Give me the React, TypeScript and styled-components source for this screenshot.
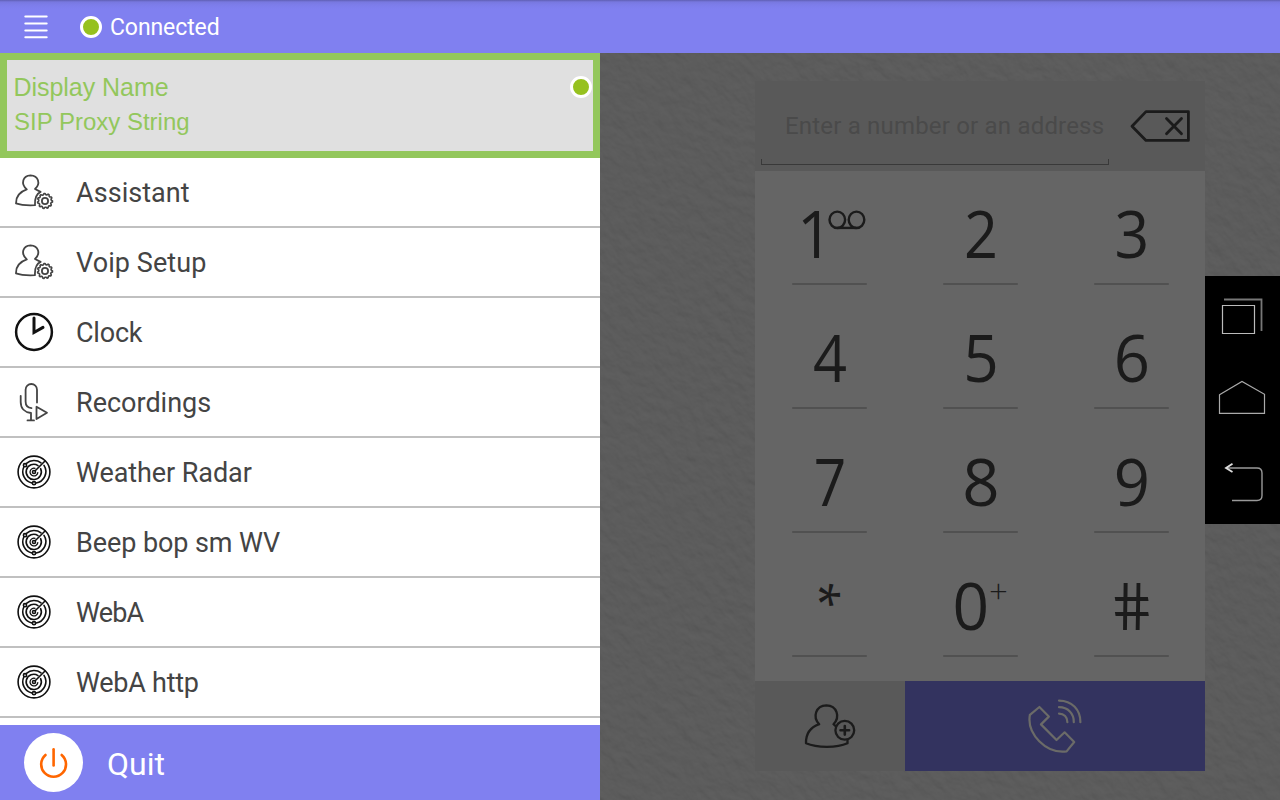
import React from "react";
import styled, { createGlobalStyle } from "styled-components";

const GlobalStyle = createGlobalStyle`
  * { box-sizing: border-box; }
  body { margin: 0; background: #5b5b5b; font-family: Roboto, "Liberation Sans", sans-serif; }
  svg { display: block; flex: none; }
`;

const Screen = styled.div`
  width: 1280px;
  height: 800px;
  display: flex;
  flex-direction: column;
  overflow: hidden;
`;

const TopBar = styled.header`
  height: 53px;
  flex: none;
  display: flex;
  align-items: center;
  padding-left: 24px;
  background: linear-gradient(#5f5fb4 0, #6c6cca 1px, #7878e0 2px, #7d7dea 5px, #8080f0 9px);
`;

const StatusDot = styled.span`
  width: 22px;
  height: 22px;
  flex: none;
  border-radius: 50%;
  border: 3px solid #fff;
  background: #96c11f;
`;

const StatusText = styled.span`
  color: #fff;
  font-size: 23px;
  line-height: 28px;
  margin-left: 8px;
  padding-top: 2px;
  letter-spacing: -0.1px;
`;

const MenuButton = styled.button`
  border: 0;
  padding: 0;
  margin-right: 32px;
  background: none;
`;

const Body = styled.main`
  flex: 1;
  display: flex;
  min-height: 0;
`;

const Drawer = styled.aside`
  width: 600px;
  display: flex;
  flex-direction: column;
  background: #fff;
`;

const Account = styled.section`
  height: 105px;
  border: 7px solid #93c75c;
  background: #e0e0e0;
  display: flex;
  justify-content: space-between;
  padding: 10px 1px 0 7px;
  color: #93c75c;
  font-family: "Liberation Sans", Arial, sans-serif;
`;

const AccountName = styled.div`
  font-size: 25px;
  line-height: 34px;
  letter-spacing: -0.04px;
  margin-left: -0.5px;
`;

const AccountAddress = styled.div`
  font-size: 24px;
  line-height: 36px;
`;

const AccountDot = styled(StatusDot)`
  margin-top: 6px;
`;

const MenuList = styled.nav`
  flex: 1;
`;

const MenuItem = styled.div`
  height: 70px;
  display: flex;
  align-items: center;
  gap: 22px;
  padding-left: 14px;
  border-bottom: 2px solid #c0c0c0;
  color: #444;
  font-size: 27px;
`;

const MenuLabel = styled.span<{ $spacing: number }>`
  letter-spacing: ${(p) => p.$spacing}px;
  padding-top: 1px;
`;

const QuitBar = styled.footer`
  height: 75px;
  display: flex;
  align-items: center;
  gap: 24px;
  padding-left: 24px;
  background: #8080f0;
  color: #fff;
  font-size: 32px;
`;

const QuitLabel = styled.span`
  padding-top: 2px;
`;

const QuitBadge = styled.span`
  width: 59px;
  height: 59px;
  border-radius: 50%;
  background: #fff;
  display: grid;
  place-items: center;
`;

const Stage = styled.section`
  flex: 1;
  position: relative;
  display: flex;
  justify-content: flex-end;
  align-items: flex-start;
  padding-top: 28px;
  background: #5b5b5b;
`;

const Wall = styled.svg`
  position: absolute;
  inset: 0;
`;

const Dialer = styled.div`
  width: 450px;
  position: relative;
`;

const AddressRow = styled.div`
  height: 90px;
  display: flex;
  align-items: center;
  padding-left: 6px;
  background: #595959;
`;

const AddressField = styled.div`
  width: 348px;
  height: 90px;
  display: flex;
  flex-direction: column;
  justify-content: flex-end;
`;

const Placeholder = styled.div`
  color: #4a4a4a;
  font-size: 24px;
  line-height: 30px;
  padding-left: 24px;
  margin-bottom: 18px;
  letter-spacing: 0.19px;
  white-space: nowrap;
`;

const FieldBracket = styled.div`
  height: 6px;
  margin-bottom: 6px;
  border: 1px solid #393939;
  border-top: 0;
`;

const EraseButton = styled.div`
  margin-left: 21px;
`;

const Keys = styled.div`
  height: 510px;
  display: grid;
  grid-template-columns: repeat(3, 151px);
  grid-template-rows: 114px repeat(3, 124px);
  overflow: hidden;
  justify-content: center;
  background: #656565;
`;

const Key = styled.div`
  display: flex;
  flex-direction: column;
  align-items: center;
  justify-content: flex-end;
  padding-left: 1px;
`;

const KeyFace = styled.div`
  height: 48px;
  margin-bottom: 24px;
  display: flex;
  align-items: flex-start;
  color: #1b1b1b;
`;

const Digit = styled.span<{ $width?: number; $shift?: number }>`
  font-family: "Open Sans", "Noto Sans", sans-serif;
  font-size: 66px;
  line-height: 43px;
  transform: translateX(${(p) => p.$shift ?? 0}px) scaleX(${(p) => p.$width ?? 0.9});
`;

const Star = styled.span`
  font-family: "Open Sans", "Noto Sans", sans-serif;
  font-size: 48px;
  line-height: 44px;
  height: 26px;
  transform: translate(1.5px, -1px) rotate(90deg);
`;

const Hash = styled(Digit)`
  transform: skewX(9deg) scaleX(0.9);
`;

const Plus = styled.span`
  font-family: "Open Sans", sans-serif;
  font-weight: 300;
  font-size: 33px;
  line-height: 16px;
  width: 18px;
  margin-left: -3px;
`;

const KeyLine = styled.div`
  width: 75px;
  height: 2px;
  border-radius: 1px;
  background: #515151;
`;

const Actions = styled.div`
  height: 90px;
  display: flex;
`;

const ContactButton = styled.div`
  width: 150px;
  padding: 20px 0 0 49px;
  background: #595959;
`;

const CallButton = styled.div`
  flex: 1;
  padding: 17px 0 0 122px;
  background: #33335f;
`;

const SystemNav = styled.div`
  width: 75px;
  height: 248px;
  margin-top: 195px;
  position: relative;
  background: #000;
`;

const HamburgerIcon = () => (
  <svg width="24" height="24" stroke="#fff" strokeWidth="2" strokeLinecap="round">
    <path d="M1.3 1.6H22.7M1.3 8.6H22.7M1.3 15.4H22.7M1.3 22.3H22.7" />
  </svg>
);

const teeth = Array.from({ length: 44 }, (_, i) => {
  const a = (i / 44) * Math.PI * 2;
  const r = i % 4 < 2 ? 7.5 : 6.3;
  return `${(31 + r * Math.cos(a)).toFixed(2)},${(29 + r * Math.sin(a)).toFixed(2)}`;
}).join(" ");

const AssistantIcon = () => (
  <svg width="40" height="40" viewBox="0 0 40 40" fill="none" stroke="#444" strokeWidth="1.8" strokeLinejoin="round" strokeLinecap="round">
    <path d="M21 33.2C13 33.6 6 32.8 2 31.4C1.8 24 5.8 19.8 12.8 17.4C6.2 11.5 9 3.5 16.5 3.3C24.5 3.5 26.9 11.5 21 17L26.6 19.9M21 33.2C20.6 26 22.4 21.8 26.6 19.9" />
    <polygon points={teeth} strokeWidth="1.6" />
    <circle cx="31" cy="29" r="3.1" />
  </svg>
);

const ClockIcon = () => (
  <svg width="40" height="40" viewBox="0 0 40 40" fill="none" stroke="#111" strokeLinecap="round">
    <circle cx="20" cy="20" r="17.9" strokeWidth="2.5" />
    <path d="M20 6V20.5L29 15.4" strokeWidth="3" />
  </svg>
);

const RecordingIcon = () => (
  <svg width="40" height="40" viewBox="0 0 40 40" fill="none" stroke="#444" strokeWidth="1.8" strokeLinecap="round" strokeLinejoin="round">
    <path d="M17.5 26.2C13.5 25.8 11.6 23 11.6 19.5V7.7A5.7 5.7 0 0 1 23 7.7V20.5" />
    <path d="M6.7 13.8V20C6.7 26.5 10.8 30.5 17 31V38.2M13.5 38.4H20" />
    <path d="M22.5 24.8V37L33 30.8Z" />
  </svg>
);

const RadarIcon = () => (
  <svg width="40" height="40" viewBox="0 0 40 40" fill="none" stroke="#111" strokeWidth="1.6" strokeLinecap="round">
    <circle cx="20" cy="20" r="15.9" />
    <path d="M30 13.4A11.5 11.5 0 0 1 22 31M18 31A11.5 11.5 0 0 1 9.8 15M12.5 11.4A11.5 11.5 0 0 1 27 10.8" />
    <path d="M26.6 16.6A7.6 7.6 0 1 1 24 13.6" />
    <path d="M23.8 20.6A3.9 3.9 0 1 1 21 16.3" strokeWidth="1.3" />
    <circle cx="20" cy="20" r="1.5" />
    <circle cx="11" cy="13.2" r="1.6" />
    <circle cx="20" cy="31.2" r="1.6" />
    <path d="M21.2 18.8L31 9" />
  </svg>
);

const PowerIcon = () => (
  <svg width="32" height="34" viewBox="0 0 32 34" fill="none" stroke="#ff6600" strokeWidth="2.6" strokeLinecap="round">
    <path d="M15.6 3.2V19.5" />
    <path d="M7.5 9A12.4 12.4 0 1 0 23.7 9" />
  </svg>
);

const EraseIcon = () => (
  <svg width="61" height="34" viewBox="0 0 61 34" fill="none" stroke="#1b1b1b" strokeWidth="2.8" strokeLinejoin="round">
    <path d="M2 17.2L16 2.6H58.4V31.4H16Z" />
    <path d="M36.5 9.5L51.5 24.8M51.5 9.5L36.5 24.8" strokeLinecap="round" />
  </svg>
);

const VoicemailIcon = () => (
  <svg width="38" height="20" viewBox="1 1 38 20" fill="none" stroke="#1b1b1b" strokeWidth="2.4" overflow="visible">
    <ellipse cx="9.3" cy="9.8" rx="7.8" ry="8.2" />
    <ellipse cx="28.5" cy="9.8" rx="7.8" ry="8.2" />
    <path d="M9.3 17.9H28.5" />
  </svg>
);

const AddContactIcon = () => (
  <svg width="54" height="50" viewBox="0 0 54 50" fill="none" stroke="#1b1b1b" strokeWidth="2.3" strokeLinejoin="round" strokeLinecap="round">
    <path d="M29.5 23.2C36.5 16 33 4.5 22.4 4.3C11.8 4.5 8.2 16 15.2 23.2C7.5 26 1.7 32 2 42.3C13 47 33 47 43.5 42.3V39.5M29.5 23.2L32 25.5" />
    <circle cx="40.8" cy="29.3" r="9.4" />
    <path d="M40.8 25V33.6M36.5 29.3H45.1" strokeWidth="2.6" />
  </svg>
);

const CallIcon = () => (
  <svg width="58" height="58" viewBox="0 0 58 58" fill="none" stroke="#6b6b68" strokeWidth="2.2" strokeLinejoin="round" strokeLinecap="round">
    <path d="M12.4 9L21.8 18.6L14 26.4L29.5 42L37.6 34.3L47.2 44L39.6 53.4C19 56 -.5 36 2.9 16.8Z" />
    <path d="M32 15.6C37 15.6 40.5 19 40.4 24.2M32 9.2C41 9.2 47 15.5 46.8 24.2M32 2.6C45 2.6 53.6 12 53.4 24.2" />
  </svg>
);

const SystemIcons = () => (
  <svg width="75" height="248" viewBox="0 0 75 248" fill="none" stroke="#aaa" strokeWidth="1.2">
    <path d="M17.5 29.5H49.5V57.5H17.5Z" stroke="#bbb" />
    <path d="M19 23.5H56.5V55" stroke="#777" strokeWidth="1.8" />
    <path d="M14.5 118.8L37 105.5L59.5 118.3V137.3H14.5Z" />
    <path d="M27 224.5H52Q57 224.5 57 219.5V197Q57 192 52 192H22" stroke="#999" strokeWidth="1.4" />
    <path d="M27.5 187.8L21 192L27.5 196" stroke="#ddd" strokeWidth="1.8" />
  </svg>
);

const Plaster = () => (
  <Wall width="680" height="747">
    <filter id="plaster" x="0" y="0" width="100%" height="100%" colorInterpolationFilters="sRGB">
      <feTurbulence type="fractalNoise" baseFrequency="0.07 0.1" numOctaves="3" seed="8" result="n" />
      <feDiffuseLighting in="n" surfaceScale="0.65" diffuseConstant="0.5" lightingColor="#bfbfbf">
        <feDistantLight azimuth="235" elevation="74" />
      </feDiffuseLighting>
    </filter>
    <g transform="rotate(48 340 373)">
      <rect x="-240" y="-160" width="1160" height="1070" filter="url(#plaster)" />
    </g>
  </Wall>
);

const items = [
  { label: "Assistant", Icon: AssistantIcon, spacing: 0.05 },
  { label: "Voip Setup", Icon: AssistantIcon, spacing: 0.08 },
  { label: "Clock", Icon: ClockIcon, spacing: -0.2 },
  { label: "Recordings", Icon: RecordingIcon, spacing: 0 },
  { label: "Weather Radar", Icon: RadarIcon, spacing: -0.08 },
  { label: "Beep bop sm WV", Icon: RadarIcon, spacing: -0.08 },
  { label: "WebA", Icon: RadarIcon, spacing: -0.8 },
  { label: "WebA http", Icon: RadarIcon, spacing: -0.25 },
];

type KeySpec = { k: string; width?: number; shift?: number };

const keys: KeySpec[] = [
  { k: "1", width: 0.95, shift: 4 },
  { k: "2" },
  { k: "3", width: 0.92 },
  { k: "4", width: 0.9 },
  { k: "5", width: 0.94 },
  { k: "6", width: 0.96 },
  { k: "7", width: 0.86 },
  { k: "8", width: 0.99 },
  { k: "9", width: 0.96 },
  { k: "*" },
  { k: "0", width: 0.97, shift: -2 },
  { k: "#" },
];

const KeySymbol = ({ k, width, shift }: KeySpec) => {
  if (k === "*") return <Star>*</Star>;
  if (k === "#") return <Hash>#</Hash>;
  return <Digit $width={width} $shift={shift}>{k}</Digit>;
};

export default function App() {
  return (
    <>
      <GlobalStyle />
      <Screen>
        <TopBar>
          <MenuButton aria-label="Menu"><HamburgerIcon /></MenuButton>
          <StatusDot />
          <StatusText>Connected</StatusText>
        </TopBar>
        <Body>
          <Drawer>
            <Account>
              <div>
                <AccountName>Display Name</AccountName>
                <AccountAddress>SIP Proxy String</AccountAddress>
              </div>
              <AccountDot />
            </Account>
            <MenuList>
              {items.map(({ label, Icon, spacing }) => (
                <MenuItem key={label}>
                  <Icon />
                  <MenuLabel $spacing={spacing}>{label}</MenuLabel>
                </MenuItem>
              ))}
            </MenuList>
            <QuitBar>
              <QuitBadge><PowerIcon /></QuitBadge>
              <QuitLabel>Quit</QuitLabel>
            </QuitBar>
          </Drawer>
          <Stage>
            <Plaster />
            <Dialer>
              <AddressRow>
                <AddressField>
                  <Placeholder>Enter a number or an address</Placeholder>
                  <FieldBracket />
                </AddressField>
                <EraseButton><EraseIcon /></EraseButton>
              </AddressRow>
              <Keys>
                {keys.map((spec) => (
                  <Key key={spec.k}>
                    <KeyFace>
                      <KeySymbol {...spec} />
                      {spec.k === "1" && <VoicemailIcon />}
                      {spec.k === "0" && <Plus>+</Plus>}
                    </KeyFace>
                    <KeyLine />
                  </Key>
                ))}
              </Keys>
              <Actions>
                <ContactButton><AddContactIcon /></ContactButton>
                <CallButton><CallIcon /></CallButton>
              </Actions>
            </Dialer>
            <SystemNav><SystemIcons /></SystemNav>
          </Stage>
        </Body>
      </Screen>
    </>
  );
}
